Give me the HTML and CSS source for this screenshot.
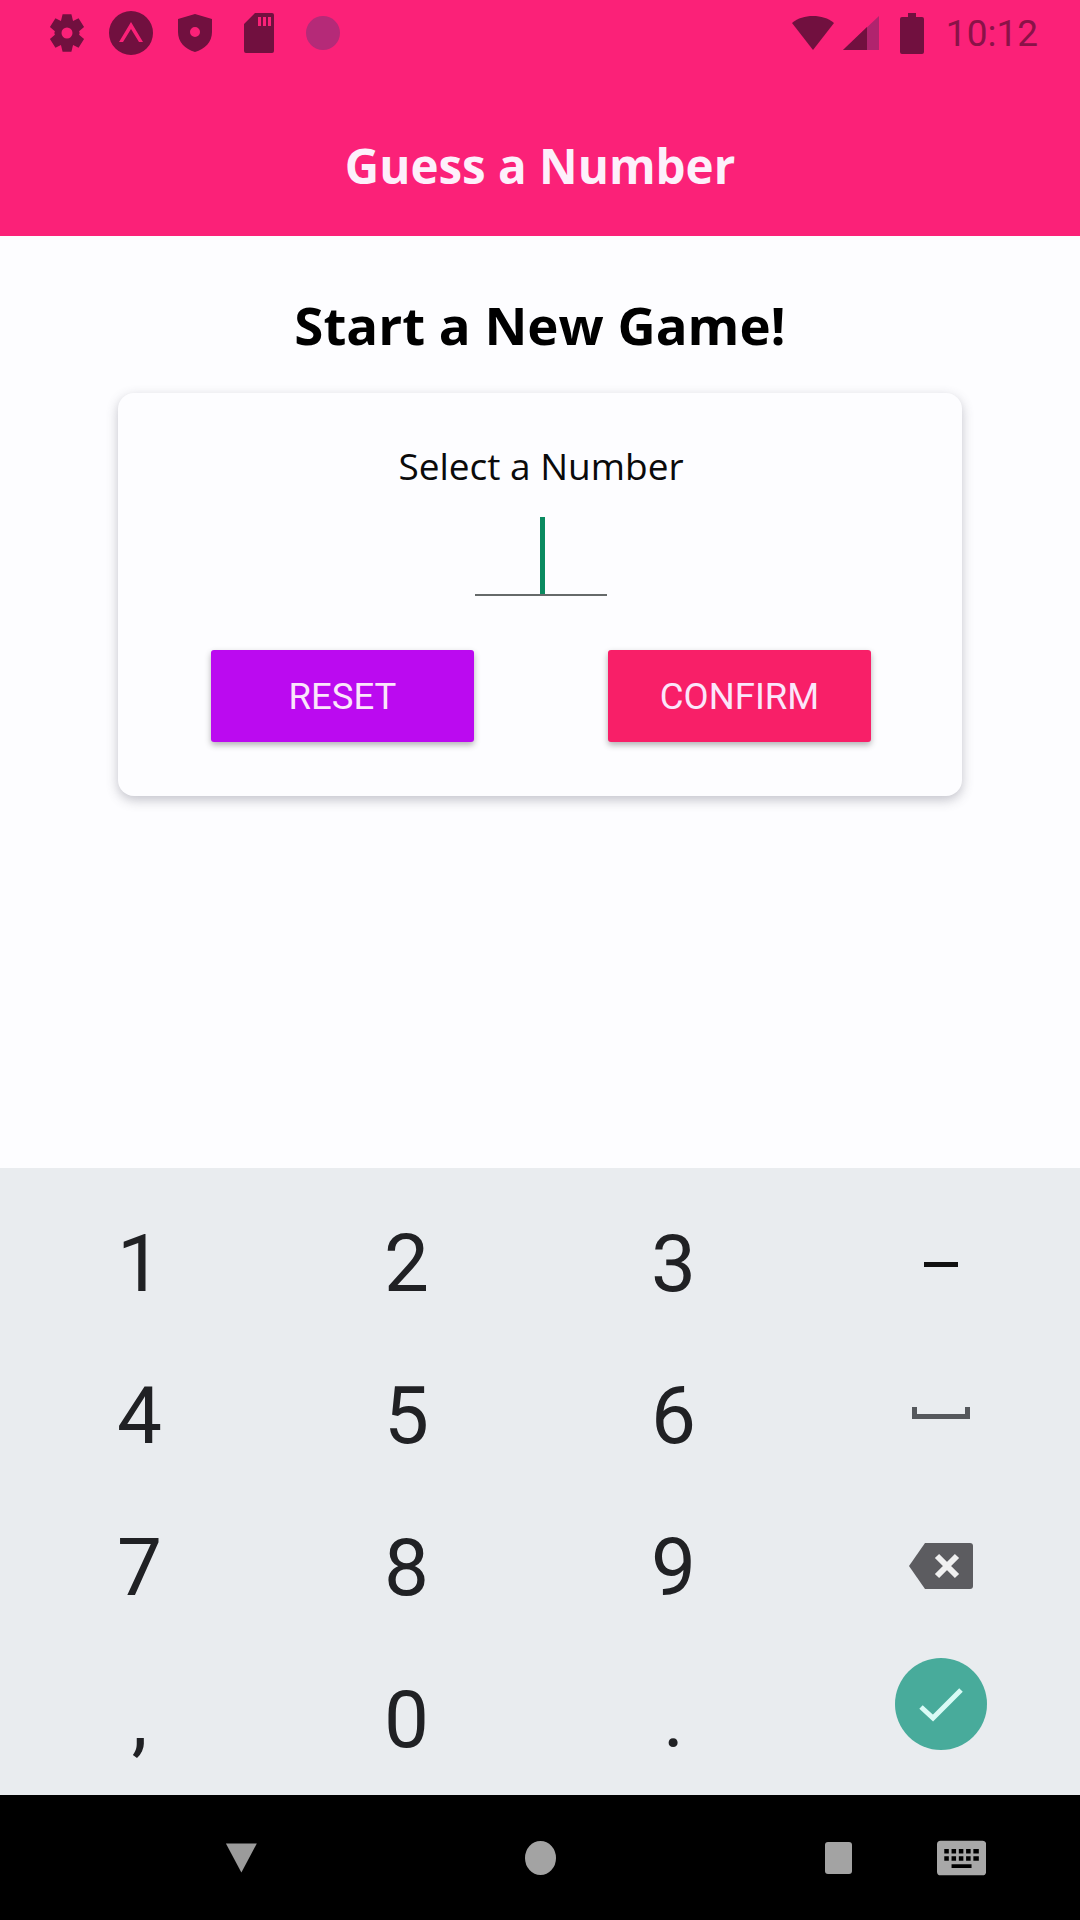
FILE: index.html
```html
<!doctype html>
<html lang="en">
  <head>
    <title>Guess a Number</title>
    <meta charset="UTF-8" />
    <meta name="viewport" content="width=device-width, initial-scale=1" />
    <link rel="stylesheet" href="styles.css">
  </head>

  <body>
    <div class="screen">
      <header class="app-header">
        <div class="status-bar">
          <div class="status-left">
            <svg class="status-icon" width="44" height="44" viewBox="0 0 40 40">
              <path fill-rule="evenodd" d="M16 3h8l1.500 6 5-2.500 5 8-4.500 4 .5 1.500-.5 1.500 4.500 4-5 8-5-2.500-1.500 6h-8l-1.500-6-5 2.500-5-8 4.500-4-.5-1.500.5-1.500-4.500-4 5-8 5 2.500zM20 15a5 5 0 1 0 0 10 5 5 0 0 0 0-10z"/>
            </svg>
            <svg class="status-icon" width="46" height="46" viewBox="0 0 46 46">
              <path fill-rule="evenodd" d="M23 1a22 22 0 1 0 0 44 22 22 0 0 0 0-44zM23 12l12 20h-4L23 19l-8 13h-4z"/>
            </svg>
            <svg class="status-icon" width="36" height="40" viewBox="0 0 36 40">
              <path fill-rule="evenodd" d="M18 1l17 5v13c0 10-7 17-17 20C8 36 1 29 1 19V6zM18 14a5 5 0 1 0 0 10 5 5 0 0 0 0-10z"/>
            </svg>
            <svg class="status-icon" width="32" height="42" viewBox="0 0 32 42">
              <path fill-rule="evenodd" d="M12 1h17a2 2 0 0 1 2 2v36a2 2 0 0 1-2 2H3a2 2 0 0 1-2-2V12zM15 5v9h3V5zM20 5v9h3V5zM25 5v9h3V5z"/>
            </svg>
            <svg class="status-icon status-faint" width="38" height="38" viewBox="0 0 38 38">
              <circle cx="19" cy="19" r="17"/>
            </svg>
          </div>
          <div class="status-right">
            <svg class="status-icon" width="44" height="36" viewBox="0 0 44 36">
              <path d="M1 8C7 3 14 1 22 1s15 2 21 7L22 35z"/>
            </svg>
            <svg class="status-signal" width="38" height="36" viewBox="0 0 38 36">
              <path fill="#b0246e" d="M1 35L37 1v34z"/>
              <path fill="#71103f" d="M1 35L25 12v23z"/>
            </svg>
            <svg class="status-icon" width="24" height="42" viewBox="0 0 24 42">
              <path d="M8 1h8v4h6a2 2 0 0 1 2 2v33a2 2 0 0 1-2 2H2a2 2 0 0 1-2-2V7a2 2 0 0 1 2-2h6z"/>
            </svg>
            <span class="status-time">10:12</span>
          </div>
        </div>
        <div class="app-title">Guess a Number</div>
      </header>

      <main class="game">
        <h1 class="game-title">Start a New Game!</h1>
        <div class="card">
          <div class="card-label">Select a Number</div>
          <div class="number-input"><span class="cursor"></span></div>
          <div class="button-row">
            <button class="btn btn-reset">RESET</button>
            <button class="btn btn-confirm">CONFIRM</button>
          </div>
        </div>
      </main>

      <section class="keyboard">
        <div class="key">1</div>
        <div class="key">2</div>
        <div class="key">3</div>
        <div class="key"><span class="minus-bar"></span></div>
        <div class="key">4</div>
        <div class="key">5</div>
        <div class="key">6</div>
        <div class="key key-space">
          <svg width="60" height="14" viewBox="0 0 60 14">
            <path fill="#55585c" d="M1 1h5v7h48V1h5v12H1z"/>
          </svg>
        </div>
        <div class="key">7</div>
        <div class="key">8</div>
        <div class="key">9</div>
        <div class="key key-delete">
          <svg width="66" height="48" viewBox="0 0 66 48">
            <path fill="#5c5c60" d="M17 1h45a3 3 0 0 1 3 3v40a3 3 0 0 1-3 3H17L1 24z"/>
            <path stroke="#f0f0f0" stroke-width="6" d="M29 14l20 20M49 14L29 34"/>
          </svg>
        </div>
        <div class="key key-punct">,</div>
        <div class="key">0</div>
        <div class="key key-punct">.</div>
        <div class="key key-done">
          <div class="done-circle">
            <svg width="46" height="36" viewBox="0 0 46 36">
              <path fill="none" stroke="#d9fbf6" stroke-width="5" d="M3 21l12 11L43 4"/>
            </svg>
          </div>
        </div>
      </section>

      <nav class="nav-bar">
        <svg class="nav-back" width="36" height="34" viewBox="0 0 36 34">
          <path fill="#9b9b9b" d="M1 1h34L18 33z"/>
        </svg>
        <span class="nav-home"></span>
        <span class="nav-recent"></span>
        <svg class="nav-keyboard" width="54" height="38" viewBox="0 0 54 38">
          <path fill="#a8a8a8" fill-rule="evenodd" d="M4 0h46a4 4 0 0 1 4 4v30a4 4 0 0 1-4 4H4a4 4 0 0 1-4-4V4a4 4 0 0 1 4-4zM8 9v5h5V9zM16 9v5h5V9zM24 9v5h5V9zM32 9v5h5V9zM40 9v5h6V9zM8 17v5h5v-5zM16 17v5h5v-5zM24 17v5h5v-5zM32 17v5h5v-5zM40 17v5h6v-5zM16 26v4h22v-4z"/>
        </svg>
      </nav>
    </div>
  </body>
</html>
```

FILE: styles.css
```css
body {
  margin: 0;
  padding: 0;
  background-color: #fdfdff;
}

.screen {
  display: flex;
  flex-direction: column;
  width: 1080px;
  height: 1920px;
  overflow: hidden;
}

.app-header {
  display: flex;
  flex-direction: column;
  height: 236px;
  background-color: #fb2178;
}

.status-bar {
  display: flex;
  justify-content: space-between;
  align-items: center;
  height: 66px;
  padding: 0 42px 0 35px;
}

.status-left {
  display: grid;
  grid-template-columns: repeat(5, 64px);
  justify-items: center;
  align-items: center;
}

.status-right {
  display: flex;
  align-items: center;
}

.status-icon {
  fill: #71103f;
}

.status-faint {
  fill: #b52a78;
}

.status-signal {
  margin: 0 20px 0 7px;
}

.status-time {
  margin-left: 22px;
  font-family: Roboto, sans-serif;
  font-size: 37px;
  color: #8a1248;
}

.app-title {
  margin-top: 71px;
  text-align: center;
  font-family: 'Open Sans', sans-serif;
  font-weight: 700;
  font-size: 47.5px;
  line-height: 58px;
  color: #fdf0fb;
}

.game {
  display: flex;
  flex-direction: column;
  align-items: center;
  flex: 1;
}

.game-title {
  margin: 55px 0 34px;
  font-family: 'Open Sans', sans-serif;
  font-weight: 700;
  font-size: 52.8px;
  line-height: 68px;
  color: #000000;
}

.card {
  display: flex;
  flex-direction: column;
  align-items: center;
  width: 844px;
  height: 403px;
  box-sizing: border-box;
  padding: 49px 0 0 2px;
  background-color: #fdfdff;
  border-radius: 16px;
  box-shadow: 0 4px 12px rgba(70, 70, 90, 0.32);
}

.card-label {
  font-family: 'Open Sans', sans-serif;
  font-size: 37px;
  line-height: 48px;
  color: #0a0a0a;
}

.number-input {
  display: flex;
  justify-content: center;
  width: 132px;
  height: 77px;
  margin-top: 27px;
  border-bottom: 2px solid #666a6a;
}

.cursor {
  width: 5px;
  height: 77px;
  margin-left: 2px;
  background-color: #0a8a60;
}

.button-row {
  display: flex;
  justify-content: space-between;
  width: 660px;
  margin-top: 54px;
}

.btn {
  width: 263px;
  height: 92px;
  border: none;
  border-radius: 3px;
  font-family: Roboto, sans-serif;
  font-size: 36.5px;
  color: #fbe6fb;
  box-shadow: 0 3px 6px rgba(0, 0, 0, 0.3);
}

.btn-reset {
  background-color: #bb0af0;
}

.btn-confirm {
  background-color: #f81f68;
}

.keyboard {
  display: grid;
  grid-template-columns: repeat(4, 267px);
  grid-auto-rows: 152px;
  height: 627px;
  box-sizing: border-box;
  padding: 20px 0 0 6px;
  background-color: #e9ecef;
}

.key {
  display: flex;
  justify-content: center;
  align-items: center;
  box-sizing: border-box;
  font-family: Roboto, sans-serif;
  font-size: 80px;
  color: #202124;
}

.key-space {
  padding-bottom: 7px;
}

.key-delete {
  padding-bottom: 4px;
}

.key-done {
  padding-bottom: 32px;
}

.minus-bar {
  width: 34px;
  height: 5px;
  background-color: #111111;
}

.done-circle {
  display: flex;
  justify-content: center;
  align-items: center;
  width: 92px;
  height: 92px;
  border-radius: 50%;
  background-color: #48ab9b;
}

.nav-bar {
  display: flex;
  align-items: center;
  height: 125px;
  padding: 0 94px 0 225px;
  background-color: #000000;
}

.nav-back {
  margin-right: 267px;
}

.nav-home {
  width: 34px;
  height: 34px;
  margin-right: 269px;
  border-radius: 50%;
  background-color: #a3a3a3;
}

.nav-recent {
  width: 30px;
  height: 32px;
  margin-right: 85px;
  border-radius: 3px;
  background-color: #a3a3a3;
}
```
